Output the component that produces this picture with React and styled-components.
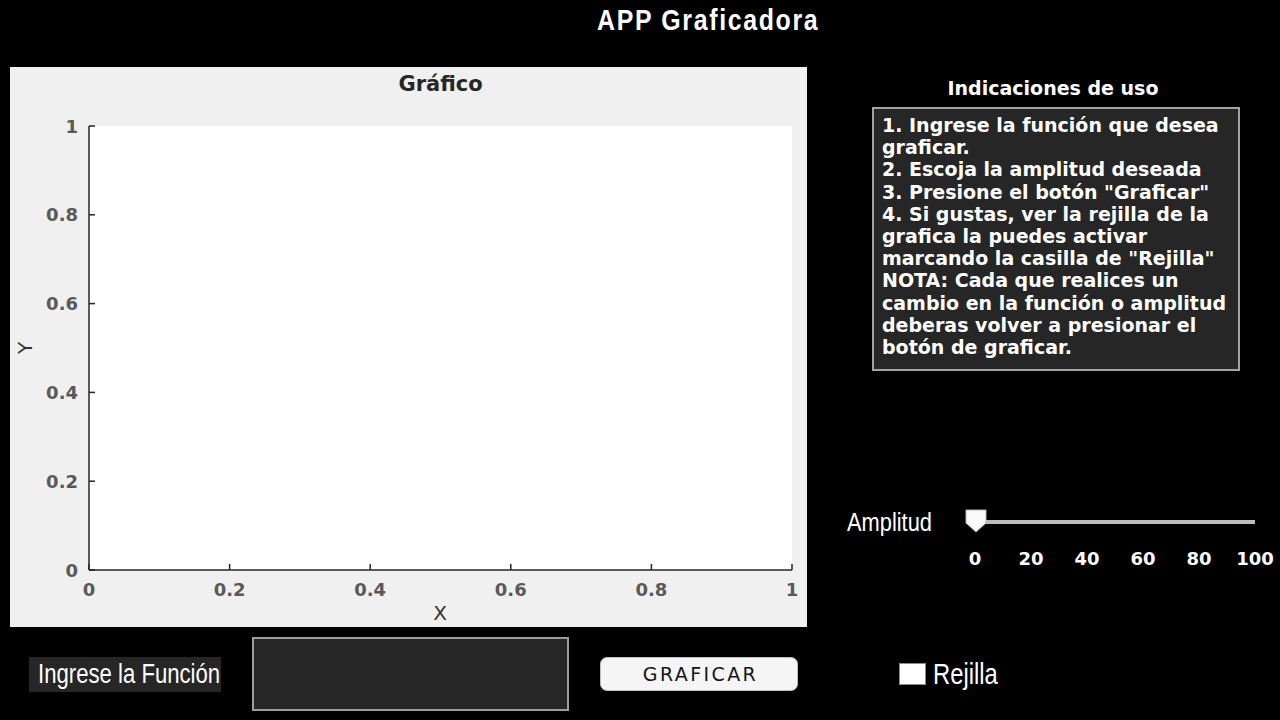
import React from 'react';
import styled, { createGlobalStyle } from 'styled-components';

const SANS = `"Liberation Sans", Arial, sans-serif`;
const WIDE = `"DejaVu Sans", "Liberation Sans", sans-serif`;

const GlobalStyle = createGlobalStyle`
  html, body {
    margin: 0;
    padding: 0;
    background: #000;
  }
  * {
    box-sizing: border-box;
  }
`;

// no condensed face is installed, so narrow lettering is squeezed horizontally
const NarrowText = styled.span`
  display: inline-block;
  white-space: nowrap;
  font-family: ${SANS};
  font-size: ${(p) => p.$size}px;
  font-weight: ${(p) => (p.$bold ? 700 : 400)};
  letter-spacing: ${(p) => p.$spacing || 0}px;
  transform: scaleX(${(p) => p.$scale});
  transform-origin: left center;
  color: #fff;
`;

const Page = styled.div`
  width: 1280px;
  height: 720px;
  background: #000;
  display: flex;
  flex-direction: column;
  overflow: hidden;
`;

const Header = styled.header`
  height: 40px;
  display: flex;
  align-items: center;
  padding-left: 597px;
`;

const AppTitle = styled.h1`
  margin: 0;
  line-height: 1;
  display: flex;
`;

const Main = styled.div`
  height: 587px;
  display: flex;
`;

const PlotPanel = styled.section`
  margin: 27px 0 0 10px;
  width: 797px;
  height: 560px;
  background: #f0f0f0;
  display: flex;
  flex-direction: column;
`;

const PlotTitle = styled.div`
  height: 33px;
  width: 782px;
  padding-left: 79px;
  display: flex;
  justify-content: center;
  align-items: center;
  font-family: ${WIDE};
  font-weight: 700;
  font-size: 21px;
  color: #262626;
`;

const SidePanel = styled.aside`
  margin-left: 33px;
  width: 440px;
  display: flex;
  flex-direction: column;
`;

const HelpHeading = styled.div`
  margin: 37px 0 0 29px;
  width: 368px;
  height: 22px;
  line-height: 22px;
  text-align: center;
  font-family: ${WIDE};
  font-weight: 700;
  font-size: 19px;
  color: #fff;
`;

const HelpBox = styled.div`
  margin: 8px 0 0 32px;
  width: 368px;
  height: 264px;
  background: #262626;
  border: 2px solid #a3a3a3;
  padding: 5px 0 0 8px;
  font-family: ${WIDE};
  font-weight: 700;
  font-size: 19px;
  line-height: 22.2px;
  color: #fff;
`;

const HelpLine = styled.div`
  white-space: nowrap;
`;

const SliderRow = styled.div`
  margin-top: 139px;
  height: 24px;
  display: flex;
  align-items: center;
`;

const AmpLabel = styled.div`
  margin-left: 7px;
  width: 86px;
  display: flex;
`;

const Track = styled.div`
  position: relative;
  margin-left: 42px;
  width: 280px;
  height: 4px;
  background: #bdbdbd;
`;

const Thumb = styled.svg`
  position: absolute;
  left: -10px;
  top: -11px;
`;

const TickRow = styled.div`
  margin: 14px 0 0 135px;
  width: 280px;
  display: flex;
  justify-content: space-between;
`;

const TickLabel = styled.span`
  width: 0;
  display: flex;
  justify-content: center;
  white-space: nowrap;
  font-family: ${WIDE};
  font-weight: 700;
  font-size: 18px;
  color: #fff;
`;

const Bottom = styled.div`
  margin-top: 10px;
  height: 74px;
  display: flex;
  align-items: center;
  padding-left: 29px;
`;

const FieldLabel = styled.div`
  width: 192px;
  height: 35px;
  padding-left: 9px;
  display: flex;
  align-items: center;
  background: #262626;
`;

const FunctionInput = styled.input`
  margin-left: 31px;
  width: 317px;
  height: 74px;
  background: #262626;
  border: 2px solid #9c9c9c;
  outline: none;
  color: #fff;
  font-family: ${WIDE};
  font-size: 18px;
  padding: 0 8px;
`;

const PlotButton = styled.button`
  margin-left: 31px;
  width: 198px;
  height: 34px;
  padding: 0 0 0 3px;
  background: #f5f5f5;
  border: 1px solid #bcbcbc;
  border-radius: 7px;
  font-family: ${WIDE};
  font-size: 19px;
  letter-spacing: 2.4px;
  color: #141414;
  cursor: pointer;
`;

const CheckLabel = styled.label`
  margin-left: 101px;
  display: flex;
  align-items: center;
  gap: 7px;
`;

const CheckBox = styled.span`
  width: 27px;
  height: 22px;
  background: #fff;
  border: 1px solid #8a8a8a;
`;

const helpLines = [
  '1. Ingrese la función que desea',
  'graficar.',
  '2. Escoja la amplitud deseada',
  '3. Presione el botón "Graficar"',
  '4. Si gustas, ver la rejilla de la',
  'grafica la puedes activar',
  'marcando la casilla de "Rejilla"',
  'NOTA: Cada que realices un',
  'cambio en la función o amplitud',
  'deberas volver a presionar el',
  'botón de graficar.',
];

const ticks = ['0', '0.2', '0.4', '0.6', '0.8', '1'];

// axes box inside the svg (svg sits just under the plot title)
const AX = { left: 79, right: 782, top: 26, bottom: 470 };

const Axes = () => {
  const w = AX.right - AX.left;
  const h = AX.bottom - AX.top;
  return (
    <svg width="797" height="527" style={{ display: 'block' }}>
      <rect x={AX.left} y={AX.top} width={w} height={h} fill="#fff" />
      {ticks.map((t, i) => {
        const x = AX.left + (w * i) / 5;
        const y = AX.bottom - (h * i) / 5;
        return (
          <g key={t}>
            <line x1={x} y1={AX.bottom} x2={x} y2={AX.bottom - 6} stroke="#262626" strokeWidth="1.5" />
            <line x1={AX.left} y1={y} x2={AX.left + 6} y2={y} stroke="#262626" strokeWidth="1.5" />
            <text
              x={x}
              y={AX.bottom + 19}
              textAnchor="middle"
              dominantBaseline="central"
              fontFamily="DejaVu Sans, sans-serif"
              fontWeight="700"
              fontSize="18"
              fill="#595959"
            >
              {t}
            </text>
            <text
              x={AX.left - 11}
              y={y}
              textAnchor="end"
              dominantBaseline="central"
              fontFamily="DejaVu Sans, sans-serif"
              fontWeight="700"
              fontSize="18"
              fill="#595959"
            >
              {t}
            </text>
          </g>
        );
      })}
      <line x1={AX.left} y1={AX.top} x2={AX.left} y2={AX.bottom} stroke="#262626" strokeWidth="1.5" />
      <line x1={AX.left} y1={AX.bottom} x2={AX.right} y2={AX.bottom} stroke="#262626" strokeWidth="1.5" />
      <text
        x="430"
        y="513"
        textAnchor="middle"
        dominantBaseline="central"
        fontFamily="DejaVu Sans, sans-serif"
        fontSize="20"
        fill="#333"
      >
        X
      </text>
      <text
        x="15"
        y="248"
        textAnchor="middle"
        dominantBaseline="central"
        fontFamily="DejaVu Sans, sans-serif"
        fontSize="20"
        fill="#333"
        transform="rotate(-90 15 248)"
      >
        Y
      </text>
    </svg>
  );
};

export default function App() {
  return (
    <Page>
      <GlobalStyle />
      <Header>
        <AppTitle>
          <NarrowText $size={30} $bold $spacing={2} $scale={0.83}>
            APP Graficadora
          </NarrowText>
        </AppTitle>
      </Header>
      <Main>
        <PlotPanel>
          <PlotTitle>Gráfico</PlotTitle>
          <Axes />
        </PlotPanel>
        <SidePanel>
          <HelpHeading>Indicaciones de uso</HelpHeading>
          <HelpBox>
            {helpLines.map((line) => (
              <HelpLine key={line}>{line}</HelpLine>
            ))}
          </HelpBox>
          <SliderRow>
            <AmpLabel>
              <NarrowText $size={26} $scale={0.84}>Amplitud</NarrowText>
            </AmpLabel>
            <Track>
              <Thumb width="22" height="24" viewBox="0 0 22 24">
                <polygon points="1,1 21,1 21,14 11,23 1,14" fill="#fafafa" stroke="#b5b5b5" strokeWidth="1" />
              </Thumb>
            </Track>
          </SliderRow>
          <TickRow>
            {['0', '20', '40', '60', '80', '100'].map((v) => (
              <TickLabel key={v}>{v}</TickLabel>
            ))}
          </TickRow>
        </SidePanel>
      </Main>
      <Bottom>
        <FieldLabel>
          <NarrowText $size={27} $scale={0.82}>Ingrese la Función</NarrowText>
        </FieldLabel>
        <FunctionInput type="text" />
        <PlotButton>GRAFICAR</PlotButton>
        <CheckLabel>
          <CheckBox />
          <NarrowText $size={29} $scale={0.82}>Rejilla</NarrowText>
        </CheckLabel>
      </Bottom>
    </Page>
  );
}
